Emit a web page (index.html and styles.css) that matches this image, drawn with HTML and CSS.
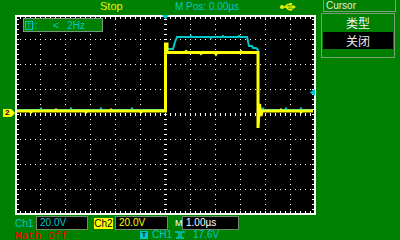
FILE: index.html
```html
<!DOCTYPE html>
<html lang="zh-CN">
<head>
    <meta charset="UTF-8">
    <title>Scope - Cursor</title>
    <link rel="stylesheet" href="styles.css">
</head>
<body>
<div class="scope">
    <div class="status">
        <span class="stop">Stop</span>
        <span class="mpos">M Pos: 0.00µs</span>
        <svg class="usb" viewBox="0 0 16 8" width="16" height="8">
            <circle cx="2" cy="4" r="2" fill="#f0f000"/>
            <path d="M2 4H13M5 4L7.5 1.5H10M6 4L8.5 6.5H10" stroke="#f0f000" stroke-width="1.5" fill="none"/>
            <polygon points="12.5,1.8 16,4 12.5,6.2" fill="#f0f000"/>
            <rect x="9.5" y="0" width="2.5" height="2.5" fill="#f0f000"/>
            <circle cx="11" cy="6.5" r="1.3" fill="#f0f000"/>
        </svg>
    </div>

    <div class="plot">
        <svg class="screen" viewBox="15 15 301 200" width="301" height="200">
            <rect x="15" y="15" width="301" height="200" fill="#000"/>
            <!-- graticule -->
            <g stroke="#fff" fill="none">
                <rect x="16" y="16" width="299" height="198" stroke-width="2"/>
                <g stroke-width="2" stroke-dasharray="1 4">
                    <line x1="20" y1="18" x2="313" y2="18"/>
                    <line x1="20" y1="212" x2="313" y2="212"/>
                    <line x1="18" y1="19" x2="18" y2="212"/>
                    <line x1="313" y1="19" x2="313" y2="212"/>
                </g>
                <g stroke-width="1" stroke-dasharray="1 4">
                    <line x1="20" y1="39.5" x2="313" y2="39.5"/>
                    <line x1="20" y1="64.5" x2="313" y2="64.5"/>
                    <line x1="20" y1="89.5" x2="313" y2="89.5"/>
                    <line x1="20" y1="139.5" x2="313" y2="139.5"/>
                    <line x1="20" y1="164.5" x2="313" y2="164.5"/>
                    <line x1="20" y1="189.5" x2="313" y2="189.5"/>
                    <line x1="40.5" y1="19" x2="40.5" y2="212"/>
                    <line x1="65.5" y1="19" x2="65.5" y2="212"/>
                    <line x1="90.5" y1="19" x2="90.5" y2="212"/>
                    <line x1="115.5" y1="19" x2="115.5" y2="212"/>
                    <line x1="140.5" y1="19" x2="140.5" y2="212"/>
                    <line x1="190.5" y1="19" x2="190.5" y2="212"/>
                    <line x1="215.5" y1="19" x2="215.5" y2="212"/>
                    <line x1="240.5" y1="19" x2="240.5" y2="212"/>
                    <line x1="265.5" y1="19" x2="265.5" y2="212"/>
                    <line x1="290.5" y1="19" x2="290.5" y2="212"/>
                </g>
                <g stroke-width="3" stroke-dasharray="1 4">
                    <line x1="20" y1="114.5" x2="313" y2="114.5"/>
                    <line x1="165.5" y1="19" x2="165.5" y2="212"/>
                </g>
            </g>
            <!-- CH1 -->
            <path class="trace ch1" d="M17 110H40L41 108.5L42 110H70L71 108.5L72 110H100L101 108.5L102 110H131L132 108.5L133 110H165V49H173L175 42L177 37H190L191 36L192 37H210L211 38L212 37H222L223 36L224 37H238L239 36L240 37H247L249 46H252L253 48H256L258 50V110H262L263 108.5L264 110H285L286 108.5L287 110H300L301 108.5L302 110H312"/>
            <!-- CH2 -->
            <path class="trace ch2" d="M17 111H30L31 112L32 111H55L56 110L57 111H85L86 112L87 111H110L111 110L112 111H140L141 112L142 111H165.5V44H167V52.5H185L186 51.5L187 52.5H200L201 53.5L202 52.5H215L216 54L217 52.5H240L241 51.5L242 52.5H258V128L259.5 104L261 116L262 111H280L281 110L282 111H300L301 112L302 111H313"/>
            <!-- trigger markers -->
            <polygon points="162,15 169,15 166,19 165,19" fill="#00c8c8"/>
            <polygon points="309.5,92.5 315,89 315,96" fill="#00c8c8"/>
        </svg>
        <div class="trig-freq">
            <span class="t-box">T</span><span class="colon">:</span>
            <span class="lt">&lt;</span><span class="hz">2Hz</span>
        </div>
        <span class="ch2-mark">2</span>
    </div>

    <div class="chan-row">
        <span class="lbl ch1-txt">Ch1</span>
        <span class="val ch1-txt">20.0V</span>
        <span class="ch2-badge">Ch2</span>
        <span class="val ch2-val">20.0V</span>
        <span class="lbl m-lbl">M</span>
        <span class="val time-val">1.00µs</span>
    </div>

    <div class="info-row">
        <span class="math">Math Off</span>
        <span class="t-badge">T</span>
        <span class="trig-src">CH1</span>
        <svg class="edge" viewBox="0 0 10 8" width="10" height="8">
            <path d="M0 1H4V7H1M10 1H6V7H9" stroke="#00c8c8" stroke-width="1.4" fill="none"/>
        </svg>
        <span class="trig-lvl">17.6V</span>
    </div>
</div>

<aside class="side">
    <div class="side-title">Cursor</div>
    <div class="menu">
        <div class="menu-item">类型</div>
        <div class="menu-item sel">关闭</div>
    </div>
</aside>
</body>
</html>
```

FILE: styles.css
```css
body {
    margin: 0;
    width: 400px;
    height: 240px;
    overflow: hidden;
    display: flex;
    background: #008000;
    font-family: 'Liberation Sans', Arial, sans-serif;
    font-size: 10px;
    color: #fff;
}
.scope { width: 321px; }

/* top status line */
.status {
    height: 15px;
    padding-left: 100px;
    display: grid;
    grid-template-columns: 75px 105px 16px;
    align-items: start;
    line-height: 12px;
}
.stop { color: #f0f000; font-size: 11px; }
.mpos { color: #00c8c8; font-size: 10px; padding-top: 1px; }
.usb { margin-top: 3px; }

/* screen */
.plot {
    position: relative;
    margin-left: 15px;
    width: 301px;
    height: 200px;
}
.screen { display: block; }
.trace { fill: none; stroke-linejoin: miter; }
.ch1 { stroke: #00c8c8; stroke-width: 2; }
.ch2 { stroke: #ffff00; stroke-width: 3; }

.trig-freq {
    position: absolute;
    left: 8px;
    top: 3px;
    width: 80px;
    height: 14px;
    box-sizing: border-box;
    border: 1px solid #7a9a7a;
    background: #008000;
    display: flex;
    align-items: center;
    padding-left: 1px;
    color: #00c8c8;
    font-size: 10px;
}
.t-box {
    width: 8px;
    height: 9px;
    box-sizing: border-box;
    border: 1px solid #00c8c8;
    font-size: 8px;
    line-height: 7px;
    text-align: center;
}
.colon { margin-left: 2px; }
.lt { margin-left: 15px; font-size: 11px; }
.hz { margin-left: 8px; }

.ch2-mark {
    position: absolute;
    left: -12px;
    top: 94px;
    width: 12px;
    height: 8px;
    background: #ffff00;
    clip-path: polygon(0 0, 70% 0, 100% 50%, 70% 100%, 0 100%);
    color: #000;
    font-size: 8px;
    font-weight: bold;
    line-height: 8px;
    padding-left: 2px;
    box-sizing: border-box;
}

/* channel settings */
.chan-row {
    margin-top: 1px;
    height: 14px;
    padding-left: 15px;
    display: flex;
    align-items: center;
}
.lbl { width: 21px; }
.ch1-txt { color: #00c8c8; }
.val {
    height: 14px;
    box-sizing: border-box;
    background: #000;
    border: 1px solid #6b8e6b;
    padding-left: 3px;
    line-height: 12px;
}
.val.ch1-txt { width: 52px; }
.ch2-badge {
    margin-left: 6px;
    width: 19px;
    height: 11px;
    background: #ffff00;
    color: #000;
    line-height: 11px;
    text-align: center;
}
.ch2-val { margin-left: 2px; width: 53px; color: #ffff00; }
.m-lbl { margin-left: 7px; width: 7px; font-size: 9px; }
.time-val { width: 57px; }

.info-row {
    height: 10px;
    padding-left: 15px;
    display: flex;
    align-items: center;
    color: #00c8c8;
    line-height: 10px;
}
.math {
    width: 125px;
    padding-top: 1px;
    color: #f00000;
    font-family: 'Liberation Mono', monospace;
    font-size: 11px;
    line-height: 10px;
}
.t-badge {
    width: 8px;
    height: 8px;
    background: #00c8c8;
    color: #003030;
    font-size: 8px;
    font-weight: bold;
    line-height: 8px;
    text-align: center;
}
.trig-src { margin-left: 4px; width: 23px; }
.trig-lvl { margin-left: 8px; }

/* side menu */
.side { width: 79px; }
.side-title {
    margin-left: 2px;
    width: 73px;
    height: 12px;
    box-sizing: border-box;
    border: 1px solid #7aa07a;
    border-top: none;
    padding-left: 2px;
    color: #e8e8e8;
    line-height: 11px;
}
.menu {
    margin-top: 1px;
    width: 74px;
    height: 45px;
    box-sizing: border-box;
    border: 1px solid #7aa07a;
    font-family: 'Noto Sans CJK SC', sans-serif;
    font-size: 12px;
}
.menu-item {
    height: 18px;
    line-height: 18px;
    text-align: center;
    color: #f0f0f0;
}
.menu-item.sel {
    margin: 0 1px;
    height: 17px;
    line-height: 17px;
    background: #000;
}
```
